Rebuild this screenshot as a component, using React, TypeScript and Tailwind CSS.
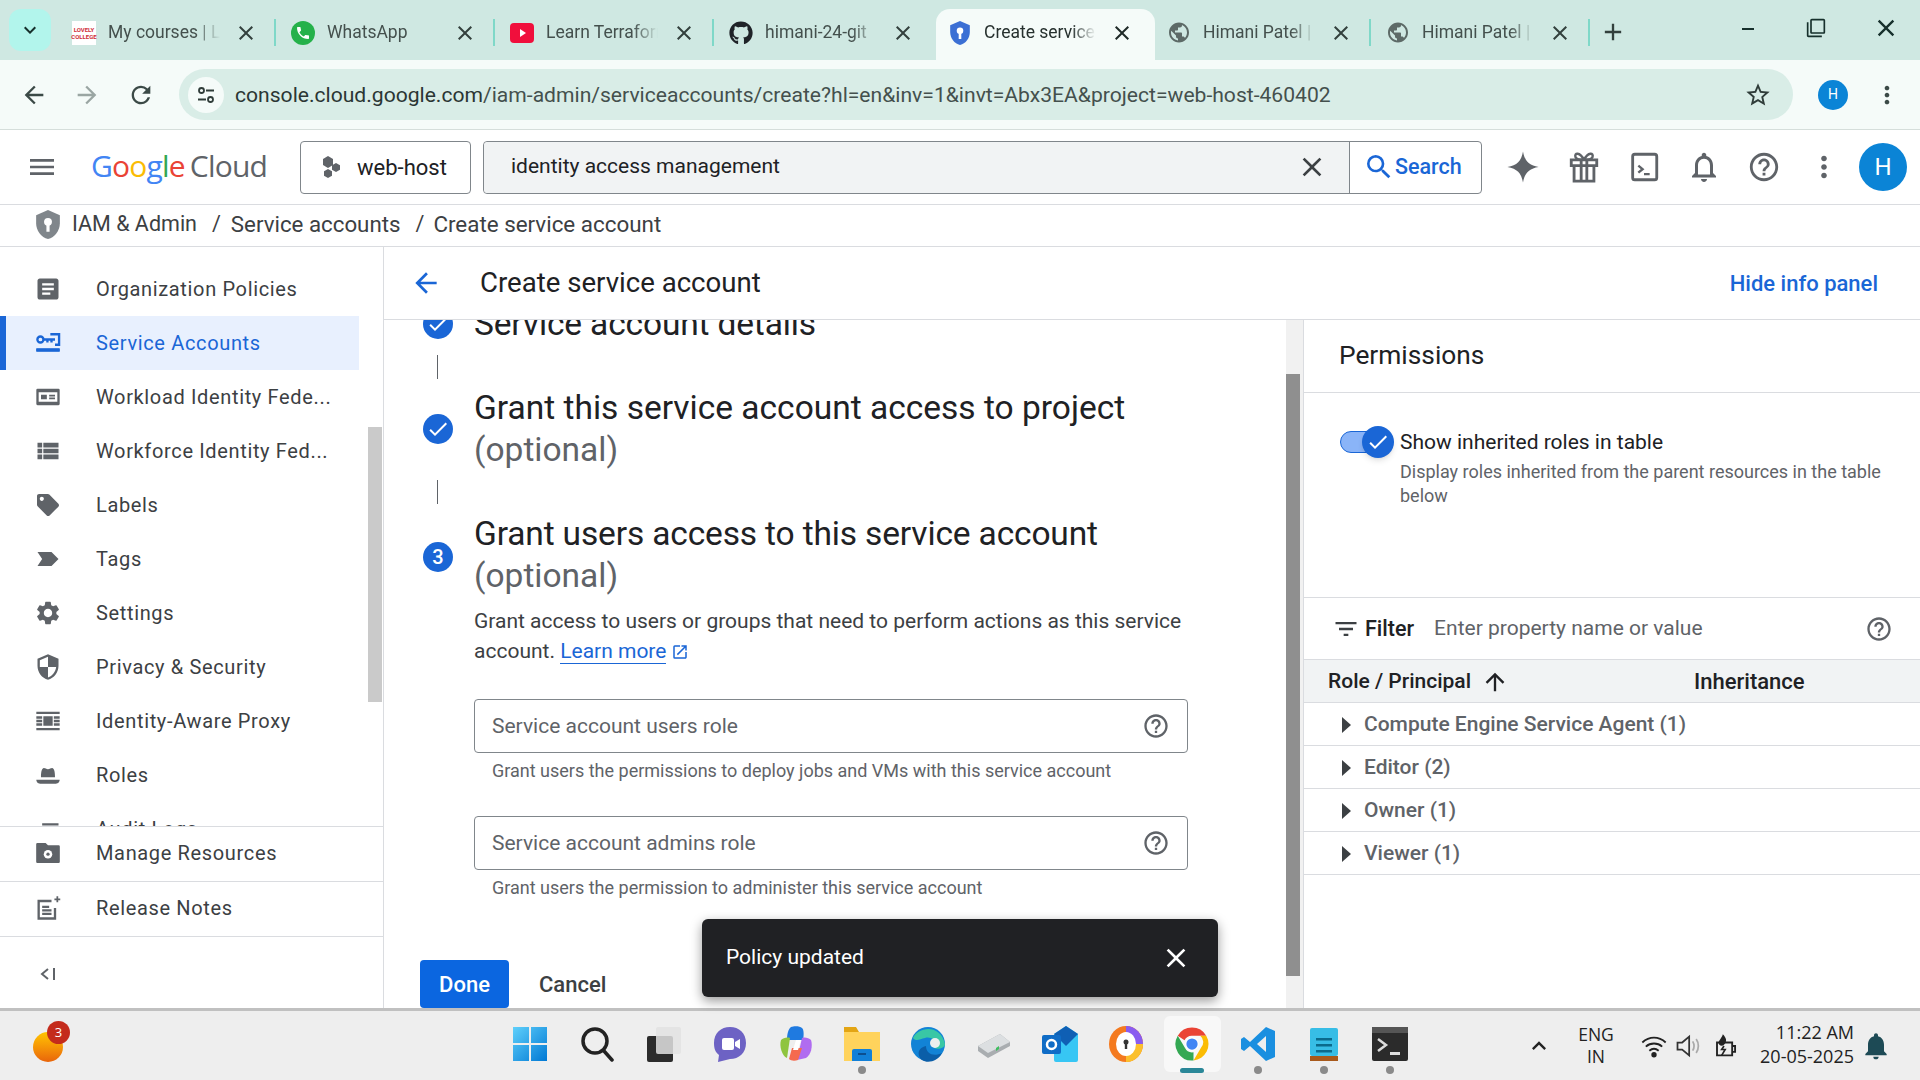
import type { ReactNode } from "react";
import {
  MdAdd,
  MdArrowBack,
  MdArrowForward,
  MdArrowUpward,
  MdArticle,
  MdCheck,
  MdClose,
  MdFilterList,
  MdHelpOutline,
  MdKeyboardArrowDown,
  MdKeyboardArrowUp,
  MdMenu,
  MdMinimize,
  MdMoreVert,
  MdNotificationsNone,
  MdOpenInNew,
  MdPhone,
  MdPublic,
  MdRefresh,
  MdSearch,
  MdSecurity,
  MdSettings,
  MdStarBorder,
  MdViewList,
  MdNotifications,
  MdFilterNone,
  MdClearAll,
} from "react-icons/md";
import { FaGithub, FaTag } from "react-icons/fa";

const chrome = { fontFamily: "Roboto, 'Liberation Sans', sans-serif" };

function LpuIcon() {
  return (
    <div className="flex h-6 w-6 flex-col items-center justify-center bg-white text-[6px] font-bold leading-[7px] text-[#d0303c]">
      <span>LOVELY</span>
      <span>COLLEGE</span>
    </div>
  );
}

function WhatsappIcon() {
  return (
    <div className="flex h-6 w-6 items-center justify-center rounded-full bg-[#25b14a]">
      <MdPhone className="h-4 w-4 text-white" />
    </div>
  );
}

function YoutubeIcon() {
  return (
    <svg viewBox="0 0 24 24" className="h-6 w-6">
      <rect x="0" y="2" width="24" height="20" rx="4" fill="#f00f3c" />
      <path d="M10 8l6 4-6 4z" fill="#fff" />
    </svg>
  );
}

function ShieldIcon({ className }: { className?: string }) {
  return (
    <svg viewBox="3 1 18 22" className={className}>
      <path d="M12 1 3 5v6c0 5.500 3.800 10.700 9 12 5.200-1.300 9-6.500 9-12V5z" fill="currentColor" />
      <circle cx="12" cy="10" r="3" fill="#fff" />
      <path d="M12 12v5.500" stroke="#fff" strokeWidth="2.400" />
    </svg>
  );
}

const tabTitle = "ml-3 w-[112px] overflow-hidden whitespace-nowrap text-[17.5px] [mask-image:linear-gradient(to_right,black_78%,transparent)]";

type TabProps = { icon: ReactNode; title: string; noSep?: boolean };

function Tab({ icon, title, noSep }: TabProps) {
  return (
    <div className="flex h-[51px] w-[219px] shrink-0 items-center pb-[4px] pl-3">
      <div className="flex h-6 w-6 shrink-0 items-center justify-center">{icon}</div>
      <div className={`${tabTitle} text-[#44504d]`}>{title}</div>
      <MdClose className="ml-[14px] h-6 w-6 shrink-0 text-[#33403d]" />
      {!noSep && <div className="ml-4 h-[27px] w-[2px] shrink-0 bg-[#7fd8c8]" />}
    </div>
  );
}

function TabStrip() {
  return (
    <div className="flex h-[60px] shrink-0 items-end bg-[#cfe8e2]" style={chrome}>
      <div className="mb-[9px] ml-[9px] flex h-[42px] w-[42px] items-center justify-center self-end rounded-[12px] bg-[#b2f5ec]">
        <MdKeyboardArrowDown className="h-6 w-6 text-[#17302c]" />
      </div>
      <div className="ml-[9px] flex items-start">
        <Tab icon={<LpuIcon />} title="My courses | L" />
        <Tab icon={<WhatsappIcon />} title="WhatsApp" />
        <Tab icon={<YoutubeIcon />} title="Learn Terraform" />
        <Tab icon={<FaGithub className="h-6 w-6 text-[#1f2328]" />} title="himani-24-git" noSep />
        <div className="flex h-[51px] w-[219px] shrink-0 items-center rounded-t-[14px] bg-[#f5fbf9] pb-[4px] pl-3">
          <ShieldIcon className="h-6 w-6 shrink-0 text-[#3b6fd4]" />
          <div className={`${tabTitle} text-[#26302e]`}>Create service</div>
          <MdClose className="ml-[14px] h-6 w-6 shrink-0 text-[#1f2a28]" />
        </div>
        <Tab icon={<MdPublic className="h-[27px] w-[27px] text-[#5d6a67]" />} title="Himani Patel |" />
        <Tab icon={<MdPublic className="h-[27px] w-[27px] text-[#5d6a67]" />} title="Himani Patel |" />
      </div>
      <MdAdd className="mb-[14px] ml-[6px] h-7 w-7 text-[#33403d]" />
      <div className="mb-[14px] ml-auto flex items-center pr-[20px] text-[#17302c]">
        <MdMinimize className="mb-[13px] mr-[1px] h-6 w-6" />
        <MdFilterNone className="ml-[45px] mt-[1px] h-5 w-5" />
        <MdClose className="ml-[46px] h-7 w-7" />
      </div>
    </div>
  );
}

function SiteInfoIcon() {
  return (
    <svg viewBox="0 0 20 20" className="h-5 w-5 text-[#2f3c39]" fill="none" stroke="currentColor" strokeWidth="1.800">
      <circle cx="5.500" cy="5.500" r="2.500" />
      <path d="M10 5.500h8M2 14.500h8" />
      <circle cx="14.500" cy="14.500" r="2.500" />
    </svg>
  );
}

function AddressBar() {
  return (
    <div className="flex h-[70px] shrink-0 items-center border-b border-[#d5dedb] bg-[#f5fbf9] pl-[20px]" style={chrome}>
      <MdArrowBack className="h-7 w-7 text-[#3b4a47]" />
      <MdArrowForward className="ml-[25px] h-7 w-7 text-[#9aa6a3]" />
      <MdRefresh className="ml-[26px] h-7 w-7 text-[#3b4a47]" />
      <div className="ml-[24px] flex h-[51px] w-[1614px] items-center rounded-full bg-[#d9ede7] pl-[9px]">
        <div className="flex h-9 w-9 items-center justify-center rounded-full bg-[#f5fbf9]">
          <SiteInfoIcon />
        </div>
        <div className="ml-[11px] whitespace-nowrap text-[21.1px] text-[#2b3634]">
          console.cloud.google.com<span className="text-[#44504d]">/iam-admin/serviceaccounts/create?hl=en&amp;inv=1&amp;invt=Abx3EA&amp;project=web-host-460402</span>
        </div>
        <MdStarBorder className="ml-auto mr-[21px] h-7 w-7 text-[#2f3c39]" />
      </div>
      <div className="ml-[25px] flex h-[30px] w-[30px] items-center justify-center rounded-full bg-[#0b84d6] text-[14px] text-white">H</div>
      <MdMoreVert className="ml-[25px] h-7 w-7 text-[#3b4a47]" />
    </div>
  );
}

function GoogleCloudLogo() {
  return (
    <div className="mb-[3px] ml-[33px] flex w-[179px] items-baseline whitespace-nowrap text-[30px] tracking-[-0.8px]" style={{ fontFamily: "'Open Sans', sans-serif" }}>
      <span className="text-[#4285f4]">G</span>
      <span className="text-[#ea4335]">o</span>
      <span className="text-[#fbbc04]">o</span>
      <span className="text-[#4285f4]">g</span>
      <span className="text-[#34a853]">l</span>
      <span className="text-[#ea4335]">e</span>
      <span className="ml-[5px] text-[#5f6368]">Cloud</span>
    </div>
  );
}

function GiftIcon() {
  return (
    <svg viewBox="0 0 24 24" className="ml-[27px] h-[34px] w-[34px]" fill="none" stroke="currentColor" strokeWidth="2">
      <path d="M3 7h18v4H3zM5 11v11h14V11M10 7v15M14 7v15" />
      <path d="M12 7C9 1 5 2 6 5c.4 1.300 3 2 6 2zM12 7c3-6 7-5 6-2-.4 1.300-3 2-6 2z" strokeWidth="1.700" />
    </svg>
  );
}

function ConsoleHeader() {
  return (
    <div className="flex h-[75px] shrink-0 items-center border-b border-[#dadce0] bg-white pl-[26px]">
      <MdMenu className="h-8 w-8 text-[#5f6368]" />
      <GoogleCloudLogo />
      <div className="ml-[30px] flex h-[53px] w-[171px] items-center rounded-[4px] border border-[#80868b] pl-[20px]">
        <svg viewBox="0 0 20 24" className="h-[24px] w-[20px] text-[#5f6368]">
          <path d="M7 1l5 3v6l-5 3-5-3V4z" fill="currentColor" />
          <path d="M15 8l4 2.300v4.400L15 17l-4-2.300v-4.400z" fill="currentColor" />
          <path d="M7 14l4 2.300v4.400L7 23l-4-2.300v-4.400z" fill="currentColor" />
        </svg>
        <span className="ml-[16px] text-[22px] text-[#202124]">web-host</span>
      </div>
      <div className="ml-[12px] flex h-[53px] w-[999px] items-center rounded-[4px] border border-[#80868b] bg-white">
        <div className="flex h-full w-[865px] items-center rounded-l-[4px] bg-[#f1f3f4] pl-[27px]">
          <span className="text-[21px] text-[#202124]">identity access management</span>
          <MdClose className="ml-auto mr-[21px] h-8 w-8 text-[#3c4043]" />
        </div>
        <div className="flex h-full flex-1 items-center border-l border-[#80868b] pl-[13px] text-[#1a66d6]">
          <MdSearch className="h-8 w-8" />
          <span className="text-[21.5px] font-medium">Search</span>
        </div>
      </div>
      <div className="flex items-center text-[#5f6368]">
        <svg viewBox="0 0 24 24" className="ml-[24px] h-[34px] w-[34px]">
          <path d="M12 1c1.200 6.800 4.200 9.800 11 11-6.800 1.200-9.800 4.200-11 11-1.200-6.800-4.200-9.800-11-11 6.800-1.200 9.800-4.200 11-11z" fill="currentColor" />
        </svg>
        <GiftIcon />
        <svg viewBox="0 0 24 24" className="ml-[26px] h-[34px] w-[34px]" fill="none" stroke="currentColor" strokeWidth="2">
          <rect x="4" y="3" width="17" height="18" rx="1.500" />
          <path d="M8 11l3 2.500-3 2.500M12 17h4" strokeWidth="1.700" />
        </svg>
        <MdNotificationsNone className="ml-[25px] h-[36px] w-[36px]" />
        <MdHelpOutline className="ml-[25px] h-[34px] w-[34px]" />
        <MdMoreVert className="ml-[26px] h-[34px] w-[34px]" />
      </div>
      <div className="ml-[18px] flex h-[48px] w-[48px] items-center justify-center rounded-full bg-[#0b84d6] text-[24px] text-white">H</div>
    </div>
  );
}

function Breadcrumbs() {
  return (
    <div className="flex h-[42px] shrink-0 items-center border-b border-[#dadce0] bg-white pb-[2px] pl-[36px] text-[#3c4043]">
      <ShieldIcon className="h-[29px] w-[24px] text-[#80868b]" />
      <span className="ml-3 text-[21.5px]">IAM &amp; Admin</span>
      <span className="ml-[15px] text-[21.5px]">/</span>
      <span className="ml-[10px] text-[22.3px]">Service accounts</span>
      <span className="ml-[15px] text-[21.5px]">/</span>
      <span className="ml-[9px] text-[22.4px]">Create service account</span>
    </div>
  );
}

const navIcon = "h-7 w-7";

const navItems: { label: string; icon: ReactNode; active?: boolean }[] = [
  { label: "Organization Policies", icon: <MdArticle className={navIcon} /> },
  {
    label: "Service Accounts",
    active: true,
    icon: (
      <svg viewBox="0 0 24 24" className={navIcon} fill="none" stroke="currentColor" strokeWidth="2">
        <circle cx="5.500" cy="9" r="2.600" />
        <path d="M8 9h10M11.500 9v2.500M15 9v2.500M14 4.500h7.500v9H18M2 18h20" />
        <path d="M2 18h20" strokeWidth="3" />
      </svg>
    ),
  },
  {
    label: "Workload Identity Fede...",
    icon: (
      <svg viewBox="0 0 24 24" className={navIcon} fill="currentColor">
        <path d="M3 5h18a1 1 0 0 1 1 1v12a1 1 0 0 1-1 1H3a1 1 0 0 1-1-1V6a1 1 0 0 1 1-1zm1 3v8h16V8zm2 2h5v4H6zm7 0h5v1.500h-5zm0 2.500h5V14h-5z" fillRule="evenodd" />
      </svg>
    ),
  },
  { label: "Workforce Identity Fed...", icon: <MdViewList className={navIcon} /> },
  { label: "Labels", icon: <FaTag className="h-[22px] w-[22px]" /> },
  {
    label: "Tags",
    icon: (
      <svg viewBox="0 0 24 24" className={navIcon} fill="currentColor">
        <path d="M3 6h12l6 6-6 6H3l4-6z" />
      </svg>
    ),
  },
  { label: "Settings", icon: <MdSettings className={navIcon} /> },
  { label: "Privacy & Security", icon: <MdSecurity className={navIcon} /> },
  {
    label: "Identity-Aware Proxy",
    icon: (
      <svg viewBox="0 0 24 24" className={navIcon} fill="currentColor">
        <path d="M2 4h20v2H2zM2 18h20v2H2zM2 8h5v2H2zM17 8h5v2h-5zM2 11h5v2H2zM17 11h5v2h-5zM2 14h5v2H2zM17 14h5v2h-5zM8 8h8v8H8z" />
      </svg>
    ),
  },
  {
    label: "Roles",
    icon: (
      <svg viewBox="0 0 24 24" className={navIcon} fill="currentColor">
        <path d="M6 14c0-5 .8-8 2.500-8 1.300 0 2 1 3.500 1s2.200-1 3.500-1c1.700 0 2.500 3 2.500 8zM2 16h20c0 2.500-2 3.500-4 3.500H6c-2 0-4-1-4-3.500z" />
      </svg>
    ),
  },
  { label: "Audit Logs", icon: <MdClearAll className={navIcon} /> },
];

function NavRow({ label, icon, active }: { label: string; icon: ReactNode; active?: boolean }) {
  return (
    <div className={`flex h-[54px] w-[359px] shrink-0 items-center ${active ? "border-l-[6px] border-[#1a66d6] bg-[#e8f0fe] pl-[28px] text-[#1a66d6]" : "pl-[34px] text-[#5f6368]"}`}>
      <span className="flex w-7 shrink-0 justify-center">{icon}</span>
      <span className={`ml-[34px] whitespace-nowrap text-[20px] tracking-[0.65px] ${active ? "" : "text-[#3c4043]"}`}>{label}</span>
    </div>
  );
}

function FooterRow({ label, icon }: { label: string; icon: ReactNode }) {
  return (
    <div className="flex h-[55px] shrink-0 items-center border-t border-[#dadce0] pb-[2px] pl-[34px] text-[#5f6368]">
      <span className="flex w-7 shrink-0 justify-center">{icon}</span>
      <span className="ml-[34px] text-[20px] tracking-[0.65px] text-[#3c4043]">{label}</span>
    </div>
  );
}

function Sidebar() {
  return (
    <aside className="relative flex w-[384px] shrink-0 flex-col border-r border-[#dadce0] bg-white">
      <div className="flex h-[579px] shrink-0 flex-col overflow-hidden pt-[15px]">
        {navItems.map((item) => (
          <NavRow key={item.label} {...item} />
        ))}
      </div>
      <div className="absolute right-[1px] top-[180px] h-[275px] w-[14px] bg-[#cacaca]" />
      <FooterRow
        label="Manage Resources"
        icon={
          <svg viewBox="1 3 22 19" className="h-[24px] w-[26px]" fill="currentColor">
            <path d="M2 5a1 1 0 0 1 1-1h7l2 2h9a1 1 0 0 1 1 1v13a1 1 0 0 1-1 1H3a1 1 0 0 1-1-1z" />
            <circle cx="12" cy="13.500" r="3.600" fill="#fff" />
            <circle cx="12" cy="13.500" r="1.400" />
          </svg>
        }
      />
      <FooterRow
        label="Release Notes"
        icon={
          <svg viewBox="0 0 24 24" className="h-7 w-7" fill="none" stroke="currentColor" strokeWidth="2">
            <path d="M15 6H4v15h14v-9M7 11h6M7 14h8M7 17h8" />
            <path d="M20 2v5M17.500 4.500h5" strokeWidth="1.500" />
          </svg>
        }
      />
      <div className="flex flex-1 items-center border-t border-[#dadce0] pl-[40px] text-[#5f6368]">
        <svg viewBox="0 0 16 14" className="mt-[2px] h-[14px] w-[16px]" fill="none" stroke="currentColor" strokeWidth="2">
          <path d="M8 2 2 7l6 5M14 1v12" />
        </svg>
      </div>
    </aside>
  );
}

function StepCircle({ children, className }: { children: ReactNode; className?: string }) {
  return <div className={`flex h-[30px] w-[30px] shrink-0 items-center justify-center rounded-full bg-[#1a66d6] text-[20px] font-medium text-white ${className ?? ""}`}>{children}</div>;
}

function StepTitle({ title, optional, tight }: { title: string; optional?: boolean; tight?: boolean }) {
  return (
    <div className="ml-[21px] text-[33.5px] leading-[42px] text-[#202124]">
      <div className={`whitespace-nowrap ${tight ? "tracking-[-0.15px]" : ""}`}>{title}</div>
      {optional && <div className="text-[#5f6368]">(optional)</div>}
    </div>
  );
}

function Connector() {
  return <div className="ml-[14px] h-[24px] w-px bg-[#5f6368]" />;
}

function RoleField({ label, hint }: { label: string; hint: string }) {
  return (
    <div>
      <div className="flex h-[54px] w-[714px] items-center rounded-[4px] border border-[#80868b] pl-[17px] pr-[17px]">
        <span className="pt-[1px] text-[21px] text-[#5f6368]">{label}</span>
        <MdHelpOutline className="ml-auto h-7 w-7 text-[#5f6368]" />
      </div>
      <div className="mt-[6px] pl-[18px] text-[18px] leading-[24px] text-[#5f6368]">{hint}</div>
    </div>
  );
}

function CenterForm() {
  return (
    <div className="relative min-w-0 flex-1 overflow-hidden">
      <div className="mt-[-17px] pl-[39px]">
        <div className="flex items-center">
          <StepCircle>
            <MdCheck className="h-6 w-6" />
          </StepCircle>
          <StepTitle title="Service account details" tight />
        </div>
        <div className="mt-[10px]">
          <Connector />
        </div>
        <div className="mt-[8px] flex items-center">
          <StepCircle>
            <MdCheck className="h-6 w-6" />
          </StepCircle>
          <StepTitle title="Grant this service account access to project" optional />
        </div>
        <div className="mt-[9px]">
          <Connector />
        </div>
        <div className="mt-[9px] flex items-center">
          <StepCircle className="mt-[4px]">3</StepCircle>
          <StepTitle title="Grant users access to this service account" optional tight />
        </div>
        <div className="ml-[51px] mt-[9px] w-[740px] text-[21px] leading-[30px] text-[#3c4043]">
          Grant access to users or groups that need to perform actions as this service account.{" "}
          <span className="border-b border-[#1a66d6] text-[#1a66d6]">Learn more</span>
          <MdOpenInNew className="ml-[5px] inline h-[18px] w-[18px] text-[#1a66d6]" />
        </div>
        <div className="ml-[51px] mt-[33px] flex flex-col gap-[33px]">
          <RoleField label="Service account users role" hint="Grant users the permissions to deploy jobs and VMs with this service account" />
          <RoleField label="Service account admins role" hint="Grant users the permission to administer this service account" />
        </div>
        <div className="ml-[-3px] mt-[60px] flex items-center">
          <div className="flex h-[48px] w-[89px] items-center justify-center rounded-[4px] bg-[#0b66e0] text-[22px] font-medium text-white">Done</div>
          <span className="ml-[30px] text-[22px] font-medium text-[#3c4043]">Cancel</span>
        </div>
      </div>
    </div>
  );
}

function PermissionRow({ label }: { label: string }) {
  return (
    <div className="flex h-[43px] items-center border-b border-[#dadce0] pl-[38px] pt-[1px] text-[21px] font-medium text-[#5f6368]">
      <svg viewBox="0 0 9 16" className="h-[16px] w-[9px] text-[#3c4043]">
        <path d="M0 0l9 8-9 8z" fill="currentColor" />
      </svg>
      <span className="ml-[13px] whitespace-nowrap">{label}</span>
    </div>
  );
}

function InfoPanel() {
  return (
    <div className="w-[617px] shrink-0 border-l border-[#dadce0]">
      <div className="flex h-[73px] items-center border-b border-[#dadce0] pl-[35px] text-[26.3px] text-[#202124]">Permissions</div>
      <div className="h-[205px] border-b border-[#dadce0] pl-[36px] pt-[37px]">
        <div className="flex">
          <div className="relative mt-[1px] h-[22px] w-[44px] shrink-0 rounded-full border border-[#1a66d6] bg-[#8ab4f8]">
            <div className="absolute right-[-11px] top-[-6px] flex h-[32px] w-[32px] items-center justify-center rounded-full bg-[#1a66d6] shadow-md">
              <MdCheck className="h-6 w-6 text-white" />
            </div>
          </div>
          <div className="ml-[16px]">
            <div className="text-[21px] leading-[24px] text-[#202124]">Show inherited roles in table</div>
            <div className="mt-[6px] w-[500px] text-[18px] leading-[24px] text-[#5f6368]">Display roles inherited from the parent resources in the table below</div>
          </div>
        </div>
      </div>
      <div className="flex h-[61px] items-center pl-[28px] pr-[27px] pt-[1px]">
        <MdFilterList className="h-7 w-7 text-[#3c4043]" />
        <span className="ml-[5px] text-[21.5px] font-medium text-[#202124]">Filter</span>
        <span className="ml-[20px] text-[21px] text-[#5f6368]">Enter property name or value</span>
        <MdHelpOutline className="ml-auto h-7 w-7 text-[#5f6368]" />
      </div>
      <div className="flex h-[44px] items-center border-y border-[#dadce0] bg-[#f1f3f4] pl-[24px] pt-[1px] font-medium text-[#202124]">
        <span className="text-[21px]">Role / Principal</span>
        <MdArrowUpward className="ml-[10px] h-7 w-7" />
        <span className="ml-[185px] text-[22px]">Inheritance</span>
      </div>
      <PermissionRow label="Compute Engine Service Agent (1)" />
      <PermissionRow label="Editor (2)" />
      <PermissionRow label="Owner (1)" />
      <PermissionRow label="Viewer (1)" />
    </div>
  );
}

function MainArea() {
  return (
    <main className="relative flex min-w-0 flex-1 flex-col bg-white">
      <div className="flex h-[73px] shrink-0 items-center border-b border-[#dadce0] pl-[26px] pr-[42px]">
        <MdArrowBack className="h-8 w-8 text-[#1a66d6]" />
        <span className="ml-[38px] text-[27.6px] text-[#202124]">Create service account</span>
        <span className="ml-auto text-[22px] font-medium text-[#1a66d6]">Hide info panel</span>
      </div>
      <div className="flex min-h-0 flex-1">
        <CenterForm />
        <div className="relative w-[17px] shrink-0 bg-[#f1f1f1]">
          <div className="ml-0 mt-[54px] h-[602px] w-[14px] bg-[#8f8f8f]" />
        </div>
        <InfoPanel />
      </div>
      <div className="absolute left-[318px] top-[672px] flex h-[78px] w-[516px] items-center justify-between rounded-[6px] bg-[#202124] pl-[24px] pr-[26px] text-[21px] text-white shadow-[0_4px_12px_rgba(0,0,0,0.4)]">
        <span>Policy updated</span>
        <MdClose className="h-8 w-8" />
      </div>
    </main>
  );
}

function WindowsIcon() {
  return (
    <svg viewBox="0 0 36 36" className="mr-[4px] h-9 w-9">
      <defs>
        <linearGradient id="win" x1="0" y1="0" x2="1" y2="1">
          <stop offset="0" stopColor="#5fd0fb" />
          <stop offset="1" stopColor="#0078d4" />
        </linearGradient>
      </defs>
      <path d="M1 1h16v16H1zM19 1h16v16H19zM1 19h16v16H1zM19 19h16v16H19z" fill="url(#win)" />
    </svg>
  );
}

function ChromeIcon() {
  return (
    <svg viewBox="0 0 48 48" className="h-9 w-9">
      <path d="M24 2a22 22 0 0 1 19 11H24a11 11 0 0 0-10 6L5 13A22 22 0 0 1 24 2z" fill="#ea4335" />
      <path d="M43 13a22 22 0 0 1-17 33l10-17a11 11 0 0 0-1-16z" fill="#fbbc04" />
      <path d="M5 13l9.500 16A11 11 0 0 0 26 35l-0 11A22 22 0 0 1 5 13z" fill="#34a853" />
      <circle cx="24" cy="24" r="9" fill="#fff" />
      <circle cx="24" cy="24" r="7.500" fill="#4285f4" />
    </svg>
  );
}

const dock: { key: string; icon: ReactNode; dot?: boolean }[] = [
  { key: "start", icon: <WindowsIcon /> },
  {
    key: "search",
    icon: (
      <svg viewBox="0 0 36 36" className="h-9 w-9" fill="none" stroke="#222" strokeWidth="3.500">
        <circle cx="15" cy="15" r="12" />
        <path d="M24 25l8 9" strokeLinecap="round" />
      </svg>
    ),
  },
  {
    key: "taskview",
    icon: (
      <svg viewBox="0 0 36 36" className="h-9 w-9">
        <rect x="1" y="10" width="26" height="26" rx="2" fill="#2b2b2b" />
        <rect x="10" y="1" width="25" height="27" rx="2" fill="#e2e2e2" fillOpacity="0.85" />
      </svg>
    ),
  },
  {
    key: "meet",
    icon: (
      <svg viewBox="0 0 36 36" className="h-9 w-9">
        <path d="M18 1c9 0 16 6 16 16s-7 16-16 16l-12 3 1-7C3 26 2 22 2 17 2 7 9 1 18 1z" fill="#6d62c4" />
        <rect x="10" y="12" width="12" height="12" rx="2" fill="#fff" />
        <path d="M23 16l5-3v10l-5-3z" fill="#fff" />
      </svg>
    ),
  },
  {
    key: "copilot",
    icon: (
      <svg viewBox="0 0 36 36" className="h-9 w-9">
        <path d="M13 1c3-1 9-1 11 1 2 1 2 8 1 12H9C9 9 10 3 13 1z" fill="#1f7ae0" />
        <path d="M3 14c2-2 6-3 9-2l-3 20C4 30 1 20 3 14z" fill="#8fc43e" />
        <path d="M24 12c3-1 7 0 9 2 2 6 0 15-5 18l-9 2z" fill="#b06cf0" />
        <path d="M14 22h10l-4 12c-3 1-7 1-9-1z" fill="#f56a4f" />
        <path d="M18 14h5l-3 10h-5z" fill="#fff" />
      </svg>
    ),
  },
  {
    key: "files",
    dot: true,
    icon: (
      <svg viewBox="0 0 36 36" className="h-9 w-9">
        <path d="M0 1h12l3 5h21v29H0z" fill="#e3a514" />
        <path d="M0 6h36v29H0z" fill="#ffd35c" />
        <path d="M8 25a2 2 0 0 1 2-2h16a2 2 0 0 1 2 2v10H8z" fill="#1280d8" />
        <rect x="14" y="27" width="8" height="2" fill="#0c4f90" />
      </svg>
    ),
  },
  {
    key: "edge",
    icon: (
      <svg viewBox="0 0 36 36" className="h-9 w-9">
        <circle cx="18" cy="18" r="17" fill="#1283d6" />
        <path d="M3 12C8 1 30-3 35 18c0 4-7 6-11 4 4-6-2-12-9-10-5 1-9 4-12 0z" fill="#39c7a5" />
        <path d="M16 20c0 8 8 11 16 7-4 8-14 11-20 7-5-4-5-12 4-14z" fill="#0b5ea8" />
        <circle cx="25" cy="17" r="5" fill="#eeeeee" />
      </svg>
    ),
  },
  {
    key: "drive",
    icon: (
      <svg viewBox="0 0 36 36" className="h-9 w-9">
        <path d="M2 20 24 8l10 8v4L12 32 2 25z" fill="#a9adb0" />
        <path d="M2 20 24 8l10 8-22 11z" fill="#dcdfe1" />
        <path d="M20 22l3-2v3l-3 2z" fill="#3fbf5f" />
      </svg>
    ),
  },
  {
    key: "outlook",
    icon: (
      <svg viewBox="0 0 36 36" className="h-9 w-9">
        <path d="M12 8 24 0l12 8v26a2 2 0 0 1-2 2H14a2 2 0 0 1-2-2z" fill="#37c6f4" />
        <path d="M12 8 24 0l12 8-12 12z" fill="#0f5fb4" />
        <rect x="0" y="9" width="19" height="19" rx="2" fill="#0f6cc6" />
        <circle cx="9.500" cy="18.500" r="4.500" fill="none" stroke="#fff" strokeWidth="2.500" />
      </svg>
    ),
  },
  {
    key: "vpn",
    icon: (
      <svg viewBox="0 0 36 36" className="h-9 w-9">
        <ellipse cx="18" cy="18" rx="17" ry="18" fill="#f47a1f" />
        <path d="M18 0a17 18 0 0 1 17 18H18z" fill="#8a5cf0" />
        <path d="M35 18a17 18 0 0 1-17 18V18z" fill="#fbc02d" />
        <ellipse cx="18" cy="18" rx="10" ry="12" fill="#fff" />
        <circle cx="18" cy="16" r="2.500" fill="#333" />
        <rect x="16.800" y="17" width="2.400" height="6" fill="#333" />
      </svg>
    ),
  },
  { key: "chrome", icon: <ChromeIcon /> },
  {
    key: "vscode",
    dot: true,
    icon: (
      <svg viewBox="0 0 36 36" className="h-9 w-9">
        <path d="M26 1l9 4v26l-9 4L10 20l-6 5-3-2V13l3-2 6 5zM26 10l-9 8 9 8z" fill="#1a8fe0" fillRule="evenodd" />
      </svg>
    ),
  },
  {
    key: "notepad",
    dot: true,
    icon: (
      <svg viewBox="0 0 36 36" className="h-9 w-9">
        <rect x="4" y="2" width="28" height="28" rx="2" fill="#37bde6" />
        <rect x="4" y="30" width="28" height="5" fill="#a85a1c" />
        <path d="M10 12h16v2.500H10zM10 18h16v2.500H10zM10 24h16v2.500H10z" fill="#0b6a8c" />
      </svg>
    ),
  },
  {
    key: "terminal",
    dot: true,
    icon: (
      <svg viewBox="0 0 36 36" className="h-9 w-9">
        <rect x="0" y="1" width="36" height="34" rx="2" fill="#2b2b2b" />
        <rect x="0" y="1" width="36" height="6" fill="#555" />
        <path d="M6 13l8 6-8 6" fill="none" stroke="#ddd" strokeWidth="2.500" />
        <rect x="18" y="26" width="10" height="3" fill="#ddd" />
      </svg>
    ),
  },
];

function Taskbar() {
  return (
    <footer className="flex h-[72px] shrink-0 items-center border-t-[3px] border-[#c0c0c0] bg-[#eeeeee]" style={{ fontFamily: "'Open Sans', sans-serif" }}>
      <div className="relative ml-[33px] mt-[3px] h-[30px] w-[30px] rounded-full bg-gradient-to-b from-[#ffc400] to-[#e8640a]">
        <div className="absolute left-[14px] top-[-11px] flex h-[23px] w-[23px] items-center justify-center rounded-full bg-[#c42b1c] text-[13px] text-white">3</div>
      </div>
      <div className="ml-[436px] flex">
        {dock.map((item) => (
          <div key={item.key} className="relative flex h-[69px] w-[66px] items-start justify-center pt-[5px]">
            <div className={`flex h-[56px] w-[57px] items-center justify-center rounded-[6px] ${item.key === "chrome" ? "bg-[#f8f8f8]" : ""}`}>{item.icon}</div>
            {item.dot && <div className="absolute bottom-[6px] h-[8px] w-[8px] rounded-full bg-[#8a8a8a]" />}
            {item.key === "chrome" && <div className="absolute bottom-[7px] h-[5px] w-[24px] rounded-full bg-[#2a8798]" />}
          </div>
        ))}
      </div>
      <MdKeyboardArrowUp className="ml-[102px] h-7 w-7 text-[#222]" />
      <div className="mb-[2px] ml-[24px] w-[38px] text-center text-[17.5px] leading-[22px] text-[#222]">
        <div>ENG</div>
        <div>IN</div>
      </div>
      <svg viewBox="0 0 24 24" className="ml-[25px] h-7 w-7 text-[#222]" fill="none" stroke="currentColor" strokeWidth="1.600">
        <path d="M2 9c6-5.500 14-5.500 20 0M5 12.500c4-3.500 10-3.500 14 0M8 16c2.500-2 5.500-2 8 0" />
        <circle cx="12" cy="19.500" r="1.500" fill="currentColor" />
      </svg>
      <svg viewBox="0 0 24 24" className="ml-[6px] h-7 w-7 text-[#333]" fill="none" stroke="currentColor" strokeWidth="1.500">
        <path d="M3 9h4l6-5v16l-6-5H3z" />
        <path d="M16 8c1.500 2.500 1.500 5.500 0 8M19 6c2.500 3.500 2.500 8.500 0 12" stroke="#aaa" />
      </svg>
      <svg viewBox="0 0 24 24" className="ml-[8px] h-7 w-7 text-[#222]" fill="none" stroke="currentColor" strokeWidth="1.600">
        <path d="M6 9h13v11H6zM19 12h2.500v5H19" />
        <path d="M11 2c3 3 4 6 1 9-1 1-3 1-4 0-2-3 2-5 3-9z" fill="currentColor" stroke="none" />
        <path d="M10 20l3-5h-3l2-3" strokeWidth="1.400" />
      </svg>
      <div className="mb-[4px] ml-[14px] w-[102px] text-right text-[18px] leading-[24px] text-[#222]">
        <div>11:22 AM</div>
        <div>20-05-2025</div>
      </div>
      <MdNotifications className="ml-[6px] h-8 w-8 text-[#1d4a55]" />
    </footer>
  );
}

export default function App() {
  return (
    <div className="flex h-screen w-[1920px] flex-col overflow-hidden bg-white" style={chrome}>
      <TabStrip />
      <AddressBar />
      <ConsoleHeader />
      <Breadcrumbs />
      <div className="flex min-h-0 flex-1">
        <Sidebar />
        <MainArea />
      </div>
      <Taskbar />
    </div>
  );
}
